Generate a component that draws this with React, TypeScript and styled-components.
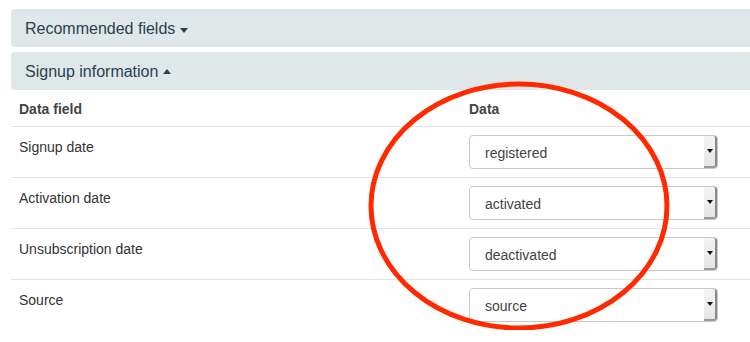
import styled, { createGlobalStyle } from 'styled-components';

const GlobalStyle = createGlobalStyle`
    html, body {
        margin: 0;
        padding: 0;
        background: #ffffff;
        overflow: hidden;
    }
    body {
        font-family: "Liberation Sans", Arial, sans-serif;
        color: #333333;
    }
`;

const fields = [
    { label: 'Signup date', value: 'registered' },
    { label: 'Activation date', value: 'activated' },
    { label: 'Unsubscription date', value: 'deactivated' },
    { label: 'Source', value: 'source' },
];

const App = () => {
    return (
        <>
            <GlobalStyle />
            <Page>
                <PanelHeader>
                    Recommended fields <Caret />
                </PanelHeader>
                <PanelHeader>
                    Signup information <Caret up />
                </PanelHeader>
                <Table>
                    <thead>
                        <tr>
                            <Th>Data field</Th>
                            <Th>Data</Th>
                        </tr>
                    </thead>
                    <tbody>
                        {fields.map((f) => (
                            <tr key={f.label}>
                                <LabelCell>{f.label}</LabelCell>
                                <Td>
                                    <SelectBox>
                                        <SelectValue>{f.value}</SelectValue>
                                        <SelectButton>
                                            <SmallCaret />
                                        </SelectButton>
                                    </SelectBox>
                                </Td>
                            </tr>
                        ))}
                    </tbody>
                </Table>
                <Annotation width="320" height="270" viewBox="0 0 320 270">
                    <ellipse cx="157" cy="129" rx="148" ry="122" fill="none" stroke="#ff2a00" strokeWidth="5" />
                </Annotation>
            </Page>
        </>
    );
};

const Page = styled.div`
    position: relative;
    width: 760px;
    padding: 9px 0 0 11px;
    display: flex;
    flex-direction: column;
    gap: 5px;
`;

const PanelHeader = styled.div`
    height: 38px;
    box-sizing: border-box;
    padding: 2px 0 0 14px;
    display: flex;
    align-items: center;
    gap: 5px;
    background-color: #e0e7e9;
    border-radius: 4px 0 0 4px;
    color: #2a4150;
    font-size: 16px;
`;

const Caret = styled.span<{ up?: boolean }>`
    display: inline-block;
    width: 0;
    height: 0;
    border-left: 4.5px solid transparent;
    border-right: 4.5px solid transparent;
    ${(props) =>
        props.up
            ? 'border-bottom: 5px solid #2a4150; margin-top: -2px;'
            : 'border-top: 5px solid #2a4150; margin-top: 2px;'}
`;

const Table = styled.table`
    width: 760px;
    border-collapse: collapse;
    margin-top: -5px;
    font-size: 14px;
    line-height: 20px;
    th:first-child,
    td:first-child {
        width: 434px;
    }
`;

const Th = styled.th`
    text-align: left;
    font-weight: bold;
    color: #444444;
    padding: 9px 8px 7px;
    border-bottom: 1px solid #e4e4e4;
`;

const Td = styled.td`
    vertical-align: top;
    padding: 8px 8px;
    border-top: 1px solid #e4e4e4;
    color: #333333;
`;

const LabelCell = styled(Td)`
    padding: 10px 8px 6px;
`;

const SelectBox = styled.div`
    width: 249px;
    height: 34px;
    box-sizing: border-box;
    display: flex;
    align-items: center;
    justify-content: space-between;
    border: 1px solid #c8c8c8;
    border-radius: 4px;
    padding-left: 15px;
    color: #444444;
    font-size: 14px;
    background: #fff;
`;

const SelectValue = styled.span`
    padding-top: 2px;
`;

const SelectButton = styled.div`
    width: 13px;
    height: 32px;
    box-sizing: border-box;
    display: flex;
    align-items: center;
    justify-content: center;
    background: linear-gradient(#f4f4f4, #e6e6e6);
    border-right: 2px solid #8a8a8a;
    border-bottom: 2px solid #9a9a9a;
    border-radius: 0 3px 3px 0;
`;

const SmallCaret = styled.span`
    width: 0;
    height: 0;
    border-left: 3px solid transparent;
    border-right: 3px solid transparent;
    border-top: 4px solid #111;
`;

const Annotation = styled.svg`
    position: absolute;
    left: 362px;
    top: 77px;
    pointer-events: none;
`;

export default App;
